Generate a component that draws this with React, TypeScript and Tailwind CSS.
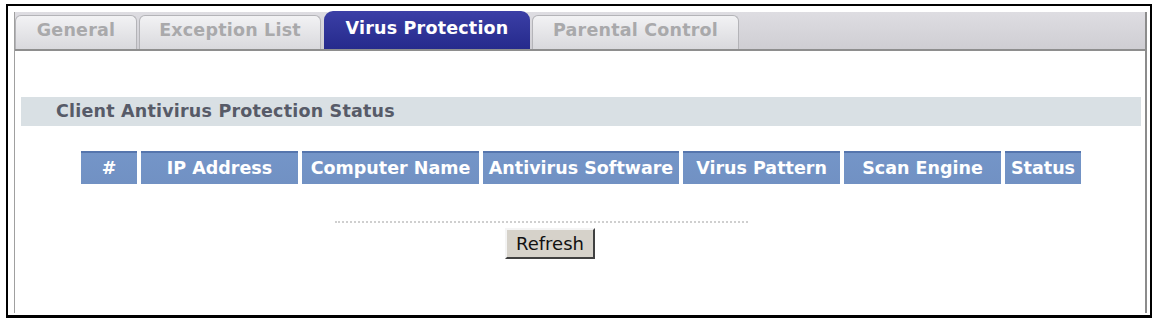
const tabs = [
  { label: 'General', width: 'w-[122px]', active: false },
  { label: 'Exception List', width: 'w-[182px]', active: false },
  { label: 'Virus Protection', width: 'w-[206px]', active: true },
  { label: 'Parental Control', width: 'w-[207px]', active: false },
];

const columns = [
  { label: '#', width: 'w-[56px]' },
  { label: 'IP Address', width: 'w-[157px]' },
  { label: 'Computer Name', width: 'w-[177px]' },
  { label: 'Antivirus Software', width: 'w-[196px]' },
  { label: 'Virus Pattern', width: 'w-[157px]' },
  { label: 'Scan Engine', width: 'w-[157px]' },
  { label: 'Status', width: 'w-[76px]' },
];

export default function App() {
  return (
    <div className="w-[1159px] h-[323px] bg-white overflow-hidden pt-[4px] pl-[6px] font-['DejaVu_Sans',sans-serif]">
      <div className="w-[1146px] h-[314px] border-2 border-b-[3px] border-black pt-[6px] pl-[6px] pr-[3px] pb-[2px]">
        <div className="h-full flex flex-col border-l border-[#a0a0a0] border-r-2 border-r-[#8c8c8c]">
          {/* tab strip */}
          <div className="h-[39px] flex items-end gap-[2px] bg-gradient-to-b from-[#dedde2] to-[#cfced3] border-b-2 border-[#8e8e8e]">
            {tabs.map((t) =>
              t.active ? (
                <div
                  key={t.label}
                  className={`${t.width} h-[38px] ml-[1px] rounded-t-[9px] bg-gradient-to-b from-[#3b3fa6] to-[#262a8c] flex items-center justify-center pb-[3px] text-white font-bold text-[17.5px] tracking-[0.2px]`}
                >
                  {t.label}
                </div>
              ) : (
                <div
                  key={t.label}
                  className={`${t.width} h-[34px] rounded-t-[6px] bg-gradient-to-b from-[#f2f2f4] to-[#d9d9dd] border border-b-0 border-[#b4b4b8] flex items-center justify-center pb-[4px] text-[#a9a9ab] font-bold text-[17.5px] tracking-[0.2px]`}
                >
                  {t.label}
                </div>
              ),
            )}
          </div>

          {/* content */}
          <div className="flex-1 bg-white flex flex-col">
            <div className="mt-[46px] ml-[6px] mr-[4px] h-[29px] bg-[#d9e0e4] flex items-center pl-[35px] text-[#575b68] font-bold text-[17.5px] tracking-[0.2px]">
              Client Antivirus Protection Status
            </div>

            <div className="mt-[25px] ml-[66px] flex gap-[4px]">
              {columns.map((c) => (
                <div
                  key={c.label}
                  className={`${c.width} h-[33px] border-t-2 border-[#5575ad] bg-gradient-to-b from-[#7495c8] to-[#7191c3] flex items-center justify-center text-white font-bold text-[17.5px] whitespace-nowrap`}
                >
                  {c.label}
                </div>
              ))}
            </div>

            <div className="mt-[37px] ml-[320px] w-[413px] border-t-2 border-dotted border-[#cfcfcf]" />

            <div className="mt-[5px] ml-[490px]">
              <button className="w-[90px] h-[31px] bg-[#d6d2ca] border-2 border-t-[#f4f4f4] border-l-[#f4f4f4] border-r-[#404040] border-b-[#404040] text-[#111] text-[18px] font-['DejaVu_Sans',sans-serif] leading-none">
                Refresh
              </button>
            </div>
          </div>
        </div>
      </div>
    </div>
  );
}
